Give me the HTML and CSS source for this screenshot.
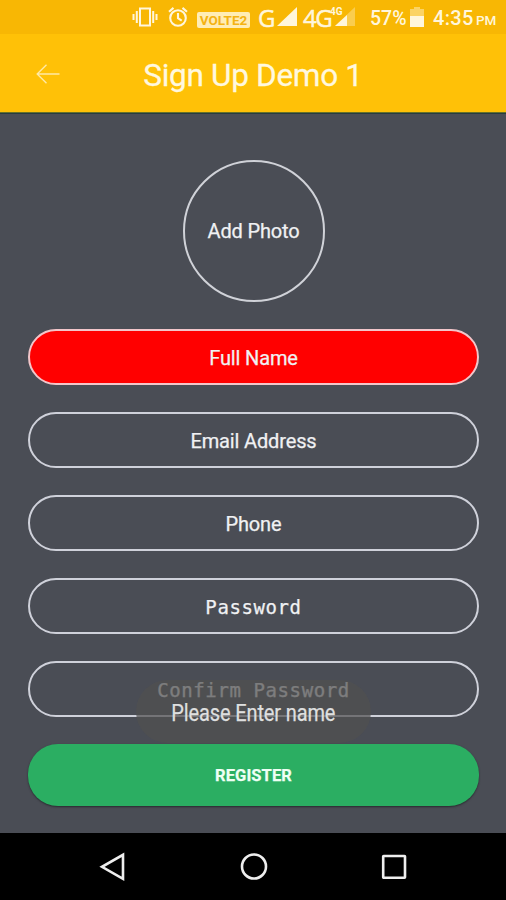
FILE: index.html
```html
<!DOCTYPE html>
<html lang="en">
<head>
<meta charset="utf-8">
<title>Sign Up Demo 1</title>
<link rel="stylesheet" href="styles.css">
</head>
<body>
<div class="screen">
  <div class="status">
    <svg class="vibrate" width="26" height="20" viewBox="0 0 26 20" fill="none" stroke="currentColor" stroke-width="2"><path d="M8 1.5h10v17H8z"/><path d="M4.8 4v12M21.2 4v12M1.5 7v6M24.5 7v6"/></svg>
    <svg class="alarm" width="20" height="20" viewBox="0 0 20 20" fill="none" stroke="currentColor" stroke-width="2.1"><circle cx="10" cy="11" r="7.8"/><path d="M1 4.7l4.5-3.8M19 4.7l-4.5-3.8M10 6v5.2l3.7 2.4"/></svg>
    <span class="volte">VOLTE2</span>
    <span class="net g">G</span>
    <svg class="signal" width="20" height="19" viewBox="0 0 20 19"><path fill="currentColor" d="M20 0v19H0z"/></svg>
    <span class="net four">4G</span>
    <span class="data">
      <svg width="20" height="19" viewBox="0 0 20 19" fill="currentColor"><path opacity=".35" d="M20 0v19H0z"/><path d="M12 8v11H0z"/></svg>
      <span class="tiny">4G</span>
    </span>
    <span class="percent">57%</span>
    <svg class="battery" width="14" height="20" viewBox="0 0 14 20" fill="currentColor"><path opacity=".45" d="M4 2V0h6v2h4v8H0V2z"/><path d="M0 9h14v11H0z"/></svg>
    <span class="time">4:35</span><span class="pm">PM</span>
  </div>
  <header class="appbar">
    <svg class="back" width="24" height="20" viewBox="0 0 24 20" fill="none" stroke="currentColor" stroke-width="1.4"><path d="M10.5.8L1.2 10l9.3 9.2M1.2 10h22.3"/></svg>
    <h1>Sign Up Demo 1</h1>
  </header>
  <main class="form">
    <div class="photo">Add Photo</div>
    <div class="field error">Full Name</div>
    <div class="field">Email Address</div>
    <div class="field">Phone</div>
    <div class="field mono">Password</div>
    <div class="field mono">Confirm Password</div>
    <div class="register">REGISTER</div>
    <div class="toast"><span>Please Enter name</span></div>
  </main>
  <nav class="nav">
    <svg width="28" height="30" viewBox="0 0 28 30"><path d="M24 3.8v24L3 15.8z"/></svg>
    <svg width="28" height="30" viewBox="0 0 28 30"><circle cx="14" cy="15.5" r="12"/></svg>
    <svg width="28" height="30" viewBox="0 0 28 30"><rect x="3.2" y="5" width="21.8" height="21.8" rx=".5"/></svg>
  </nav>
</div>
</body>
</html>
```
FILE: styles.css
```css
* { box-sizing: border-box; }
body { margin: 0; font-family: Roboto, sans-serif; }
.screen { width: 506px; height: 900px; display: flex; flex-direction: column; background: #4a4d55; overflow: hidden; }
.status { height: 34px; flex: none; display: flex; align-items: flex-start; padding: 7px 0 0 132px; background: #f8b704; color: #fff6dc; line-height: 20px; white-space: nowrap; }
.status > * { flex: none; }
.vibrate { margin-right: 10px; }
.alarm { margin-right: 9px; }
.volte { width: 53px; height: 16px; margin: 5px 8px 0 0; border-radius: 2px; background: #ffedb5; color: #f4b313; font-size: 13.5px; font-weight: 700; line-height: 17px; text-align: center; }
.net { font-family: "Open Sans", sans-serif; font-size: 24px; line-height: 21px; -webkit-text-stroke: .5px currentColor; }
.g { width: 19px; }
.signal { margin-right: 6px; }
.four { width: 32px; letter-spacing: -1.5px; }
.data { position: relative; width: 20px; height: 19px; margin-right: 15px; }
.tiny { position: absolute; left: -5px; top: -1px; font-size: 10px; font-weight: 700; line-height: 12px; }
.percent { width: 40px; font-size: 19.5px; font-weight: 500; line-height: 23px; }
.battery { margin-right: 9px; }
.time { width: 43px; font-size: 20px; font-weight: 500; line-height: 23px; letter-spacing: .3px; }
.pm { font-size: 13.5px; font-weight: 500; line-height: 26px; }
.appbar { height: 79px; flex: none; display: grid; grid-template-columns: 60px 1fr 60px; align-items: center; background: #ffc107; color: #fff8df; border-bottom: 1px solid #67712a; box-shadow: 0 1px 0 #263c3e; }
.back { margin: 1px 0 0 36px; color: #ffe9a5; }
h1 { margin: 6px 0 0; font-size: 31.5px; line-height: 38px; font-weight: 400; letter-spacing: -.3px; text-align: center; white-space: nowrap; -webkit-text-stroke: .3px currentColor; }
.form { position: relative; height: 720px; flex: none; display: flex; flex-direction: column; gap: 27px; padding: 47px 27px 0 28px; color: #f0f1f3; font-size: 20px; letter-spacing: -.15px; -webkit-text-stroke: .25px currentColor; }
.photo { width: 142px; height: 142px; align-self: center; display: flex; align-items: center; justify-content: center; border: 2px solid #d0d2d8; border-radius: 50%; }
.field { height: 56px; flex: none; display: flex; align-items: center; justify-content: center; padding-top: 2px; border: 2px solid #cfd1da; border-radius: 28px; }
.error { background: #f00; border-color: #f2c6ca; }
.mono { font-family: "DejaVu Sans Mono", monospace; font-size: 19px; letter-spacing: .6px; }
.register { height: 62px; flex: none; display: flex; align-items: center; justify-content: center; border-radius: 30px; background: #2bae62; color: #eefff4; font-size: 16.5px; font-weight: 700; letter-spacing: .1px; box-shadow: 0 1px 2px #292b30; }
.toast { position: absolute; left: 136px; top: 567px; width: 235px; height: 63px; display: flex; align-items: center; justify-content: center; padding-top: 3px; border-radius: 32px; background: rgba(80, 81, 81, .72); color: #dedfdf; font-size: 23px; white-space: nowrap; }
.toast span { transform: scaleX(.87); }
.nav { height: 67px; flex: none; display: flex; align-items: flex-start; justify-content: space-between; padding: 18px 98px 0 99px; background: #000; }
.nav svg { fill: none; stroke: #eee; stroke-width: 2.6; }
```
